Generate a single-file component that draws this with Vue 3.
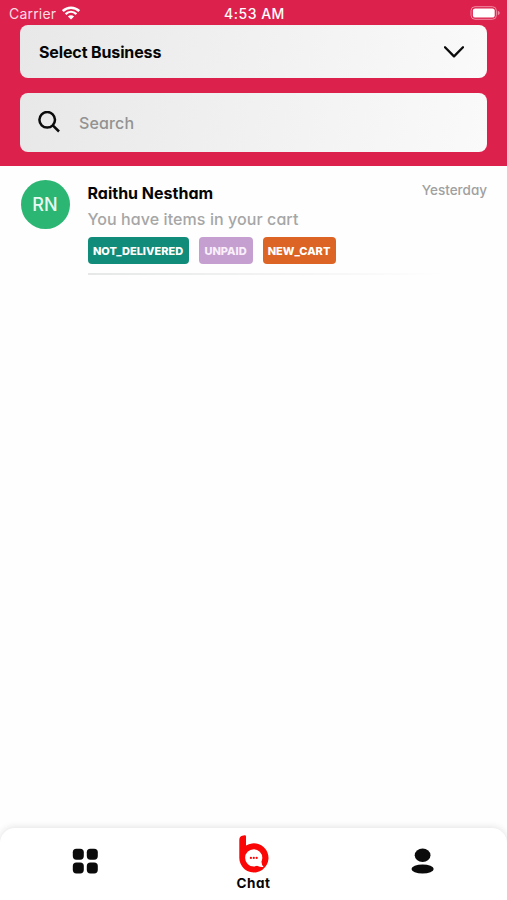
<template>
  <div class="screen">
    <header class="header">
      <div class="status-bar">
        <div class="status-left">
          <span class="carrier">Carrier</span>
          <svg class="wifi" viewBox="0 0 18 14" width="18" height="14">
            <path d="M0.8 5 C5.5 0.6 12.5 0.6 17.2 5" />
            <path d="M3.6 8.1 C6.8 5.1 11.2 5.1 14.4 8.1" />
            <path class="wifi-dot" d="M5.9 10.4 C7.7 8.9 10.3 8.9 12.1 10.4 L9 13.5 Z" />
          </svg>
        </div>
        <span class="time">4:53 AM</span>
        <div class="status-right">
          <svg viewBox="0 0 30 14" width="30" height="14">
            <rect class="battery-outline" x="1" y="0.7" width="25.4" height="12.6" rx="4" />
            <rect class="battery-fill" x="2.9" y="2.4" width="21.8" height="9.2" rx="2.2" />
            <path class="battery-cap" d="M27.8 4.8 Q29.8 5.5 29.8 7 Q29.8 8.6 27.8 9.2 Z" />
          </svg>
        </div>
      </div>

      <button class="select-box">
        <span class="select-label">Select Business</span>
        <svg class="chevron" viewBox="0 0 20 12" width="20" height="12">
          <path d="M1 1.3 L10 10.4 L19 1.3" />
        </svg>
      </button>

      <div class="search-box">
        <svg class="search-icon" viewBox="0 0 22 22" width="22" height="22">
          <circle cx="9.2" cy="8.8" r="7.8" />
          <path d="M14.8 14.4 L21 20.5" />
        </svg>
        <input v-model="search" class="search-input" type="text" placeholder="Search" />
      </div>
    </header>

    <main class="chat-list">
      <div v-for="chat in chats" :key="chat.name" class="chat-item">
        <div class="avatar">{{ chat.initials }}</div>
        <div class="chat-body">
          <div class="chat-top">
            <span class="chat-name">{{ chat.name }}</span>
            <span class="chat-date">{{ chat.date }}</span>
          </div>
          <div class="chat-message">{{ chat.message }}</div>
          <div class="tags">
            <span v-for="tag in chat.tags" :key="tag.label" :class="['tag', tag.type]">{{ tag.label }}</span>
          </div>
          <div class="divider"></div>
        </div>
      </div>
    </main>

    <nav class="tab-bar">
      <button class="tab">
        <svg viewBox="0 0 26 26" width="26" height="26">
          <rect x="0.8" y="0.7" width="11" height="11" rx="3.6" />
          <rect x="14.8" y="0.7" width="11" height="11" rx="3.6" />
          <rect x="0.8" y="14.4" width="11" height="11" rx="3.6" />
          <rect x="14.8" y="14.4" width="11" height="11" rx="3.6" />
        </svg>
      </button>
      <button class="tab active">
        <svg viewBox="0 0 30 38" width="30" height="38">
          <path class="logo-red" d="M0.3 5 Q0.3 1.6 3.2 0.8 L5.6 0.2 Q7 0 7 1.6 V10.6 A14.6 14.6 0 1 1 0.3 22.9 Z" />
          <circle class="logo-white" cx="14.7" cy="22.9" r="8.6" />
          <path class="logo-white" d="M17.5 30.5 Q21.5 32.5 24.6 32 Q22.6 30 22.4 26.5 Z" />
          <circle class="logo-red" cx="11.9" cy="22.9" r="1.1" />
          <circle class="logo-red" cx="14.8" cy="22.9" r="1.1" />
          <circle class="logo-red" cx="17.7" cy="22.9" r="1.1" />
        </svg>
        <span class="tab-label">Chat</span>
      </button>
      <button class="tab">
        <svg viewBox="0 0 24 26" width="24" height="26">
          <ellipse cx="11.6" cy="7.2" rx="7.9" ry="6.7" />
          <ellipse cx="11.6" cy="21" rx="11.1" ry="4.5" />
        </svg>
      </button>
    </nav>
  </div>
</template>

<script setup>
import { ref } from 'vue'

const search = ref('')

const chats = ref([
  {
    initials: 'RN',
    name: 'Raithu Nestham',
    date: 'Yesterday',
    message: 'You have items in your cart',
    tags: [
      { label: 'NOT_DELIVERED', type: 'delivery' },
      { label: 'UNPAID', type: 'payment' },
      { label: 'NEW_CART', type: 'cart' }
    ]
  }
])
</script>

<style>
body {
  margin: 0;
  background: #fff;
}
</style>

<style scoped>
.screen {
  display: flex;
  flex-direction: column;
  height: 100vh;
  overflow: hidden;
  background: #fefefe;
  font-family: Inter, 'Open Sans', sans-serif;
  font-feature-settings: 'cv11';
  color: #050505;
}

button {
  padding: 0;
  border: none;
  background: none;
  font: inherit;
  font-feature-settings: inherit;
  color: inherit;
}

svg {
  display: block;
}

.header {
  box-sizing: border-box;
  height: 166px;
  padding: 0 20px;
  flex-shrink: 0;
  background: #dc214c;
}

.status-bar {
  display: grid;
  grid-template-columns: 1fr auto 1fr;
  align-items: center;
  height: 25px;
  margin: 0 -13px 0 -11px;
  padding-top: 1px;
  box-sizing: border-box;
  font-size: 14px;
  font-feature-settings: normal;
  color: #fff;
}

.status-left {
  display: flex;
  align-items: center;
  gap: 6px;
}

.carrier {
  letter-spacing: 0.2px;
  color: #fbdce3;
}

.wifi path {
  fill: none;
  stroke: #fff;
  stroke-width: 2.4;
}

.wifi .wifi-dot {
  fill: #fff;
  stroke: none;
}

.time {
  font-weight: 500;
  letter-spacing: 0.5px;
}

.status-right {
  display: flex;
  justify-content: flex-end;
}

.battery-outline {
  fill: none;
  stroke: #f08ca3;
  stroke-width: 1;
}

.battery-fill {
  fill: #fff;
}

.battery-cap {
  fill: #f08ca3;
}

.select-box,
.search-box {
  display: flex;
  align-items: center;
  box-sizing: border-box;
  width: 467px;
  border-radius: 8px;
  background: linear-gradient(100deg, #e8e8e8, #fafafa);
}

.select-box {
  justify-content: space-between;
  height: 53px;
  padding: 0 23px 0 19px;
}

.select-label {
  font-size: 16px;
  font-weight: 700;
  letter-spacing: -0.13px;
}

.chevron path {
  fill: none;
  stroke: #0b0b0b;
  stroke-width: 2.3;
  stroke-linecap: round;
  stroke-linejoin: round;
}

.search-box {
  gap: 19px;
  height: 59px;
  margin-top: 14.5px;
  padding: 0 18px;
}

.search-icon {
  fill: none;
  stroke: #0b0b0b;
  stroke-width: 2.5;
}

.search-input {
  flex: 1;
  min-width: 0;
  height: 30px;
  padding: 2px 0 0;
  border: none;
  outline: none;
  background: none;
  font: 500 16px Inter, 'Open Sans', sans-serif;
  font-feature-settings: 'cv11';
  letter-spacing: 0.15px;
}

.search-input::placeholder {
  color: #929292;
}

.chat-list {
  flex: 1;
}

.chat-item {
  display: flex;
  gap: 18px;
  padding: 14px 20px 0 20.5px;
}

.avatar {
  display: flex;
  align-items: center;
  justify-content: center;
  width: 49px;
  height: 49px;
  flex-shrink: 0;
  border-radius: 50%;
  background: #2bb673;
  font-size: 18px;
  font-weight: 500;
  color: #e9f9f1;
}

.chat-body {
  flex: 1;
}

.chat-top {
  display: flex;
  justify-content: space-between;
  height: 26px;
}

.chat-name {
  font-size: 16px;
  font-weight: 700;
  line-height: 27px;
}

.chat-date {
  font-size: 13.5px;
  font-weight: 500;
  line-height: 21px;
  color: #a0a0a0;
}

.chat-message {
  height: 31px;
  font-size: 16px;
  font-weight: 500;
  line-height: 27px;
  letter-spacing: 0.08px;
  color: #a6a6a6;
}

.tags {
  display: flex;
  gap: 10px;
}

.tag {
  display: flex;
  align-items: center;
  justify-content: center;
  box-sizing: border-box;
  height: 27px;
  border-radius: 4px;
  font-size: 11px;
  font-weight: 800;
  color: #fff;
}

.delivery {
  width: 101px;
  background: #128c7a;
}

.payment {
  width: 54px;
  background: #c59fcf;
  color: #f8effa;
}

.cart {
  width: 73px;
  background: #dc6424;
}

.divider {
  height: 2px;
  margin-top: 9px;
  background: linear-gradient(90deg, #e6e7e7, #fefefe 90%);
}

.tab-bar {
  display: grid;
  grid-template-columns: repeat(3, 1fr);
  height: 72px;
  flex-shrink: 0;
  border-radius: 15px 15px 0 0;
  background: #fff;
  box-shadow: 0 -1px 7px rgba(0, 0, 0, 0.11);
}

.tab {
  display: flex;
  flex-direction: column;
  align-items: center;
  padding-top: 20px;
  fill: #0b0b0b;
}

.tab.active {
  padding-top: 7px;
}

.logo-red {
  fill: #fb0606;
}

.logo-white {
  fill: #fff;
}

.tab-label {
  margin-top: 2px;
  font-size: 13.5px;
  font-weight: 700;
  line-height: 17px;
  letter-spacing: 0.5px;
}
</style>
